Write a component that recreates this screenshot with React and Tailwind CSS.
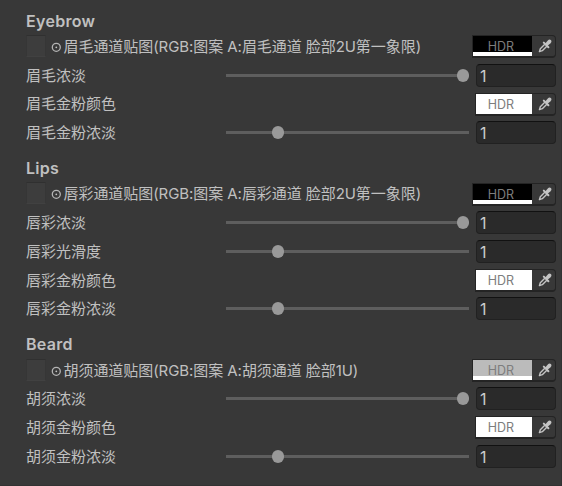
const groups = [
  {
    title: "Eyebrow",
    head: "h-[35px] pt-[11px]",
    rows: [
      { type: "texture", label: "眉毛通道贴图(RGB:图案 A:眉毛通道 脸部2U第一象限)", fill: "bg-black", h: "h-[29px]" },
      { type: "slider", label: "眉毛浓淡", full: true, h: "h-[28px]" },
      { type: "color", label: "眉毛金粉颜色", h: "h-[29px]", nudge: "mt-px" },
      { type: "slider", label: "眉毛金粉浓淡", h: "h-[29px]" },
    ],
  },
  {
    title: "Lips",
    head: "h-[32px] pt-[8px]",
    rows: [
      { type: "texture", label: "唇彩通道贴图(RGB:图案 A:唇彩通道 脸部2U第一象限)", fill: "bg-black", h: "h-[29px]", nudge: "mt-px" },
      { type: "slider", label: "唇彩浓淡", full: true, h: "h-[29px]" },
      { type: "slider", label: "唇彩光滑度", h: "h-[29px]" },
      { type: "color", label: "唇彩金粉颜色", h: "h-[28px]" },
      { type: "slider", label: "唇彩金粉浓淡", h: "h-[29px]" },
    ],
  },
  {
    title: "Beard",
    head: "h-[33px] pt-[8px]",
    rows: [
      { type: "texture", label: "胡须通道贴图(RGB:图案 A:胡须通道 脸部1U)", fill: "bg-[#bbbbbb]", h: "h-[28px]" },
      { type: "slider", label: "胡须浓淡", full: true, h: "h-[29px]" },
      { type: "color", label: "胡须金粉颜色", h: "h-[29px]" },
      { type: "slider", label: "胡须金粉浓淡", h: "h-[29px]" },
    ],
  },
];

function Eyedropper() {
  return (
    <svg viewBox="0 0 14 14" className="h-[14px] w-[14px]" fill="none">
      <path d="M6.8 5.2 2.3 9.7 1.4 12.6 4.3 11.7 8.8 7.2" stroke="#c4c4c4" strokeWidth="1.4" strokeLinejoin="round" />
      <path d="M5.8 3.6 10.4 8.2" stroke="#c4c4c4" strokeWidth="2" strokeLinecap="round" />
      <path d="M7 4.8 9.8 1.4Q11.4-.1 12.9 1.1 14.1 2.6 12.6 4.2L9.2 7Z" fill="#c4c4c4" />
    </svg>
  );
}

function ColorField({ wide, fill }) {
  return (
    <div
      className={`flex h-[23px] shrink-0 rounded-r-[4px] border border-b-2 border-[#242424] ${wide ? "w-[84px]" : "w-[81px]"}`}
    >
      <div className={`relative flex flex-1 flex-col ${fill}`}>
        <span className="absolute top-[3px] right-[18px] text-[12.5px] leading-[16px] text-[#7d7d7d]">HDR</span>
        {wide && <div className="mt-auto h-[4px] bg-white" />}
      </div>
      <div className="flex w-[23px] items-center justify-center pl-[2px]">
        <Eyedropper />
      </div>
    </div>
  );
}

function Slider({ full }) {
  return (
    <div className="relative flex h-[23px] w-[243px] shrink-0 items-center">
      <div className="h-[3px] w-full bg-[#5e5e5e]" />
      <div
        className={`absolute top-[5px] h-[13px] w-[12px] rounded-full bg-[#999999] ${full ? "left-[231px]" : "left-[46px]"}`}
      />
    </div>
  );
}

function Row({ row }) {
  return (
    <div className={`flex pl-[26px] ${row.h}`}>
      {row.type === "texture" ? (
        <div className="flex h-[23px] w-[446px]">
          <div className="h-[22px] w-[20px] border border-t-[#303030] border-r-[#363636] border-b-[#414141] border-l-[#363636] bg-[#3d3d3d]" />
          <svg viewBox="0 0 10 10" className="mt-[7px] ml-[5px] h-[10px] w-[10px]" fill="none">
            <circle cx="5.3" cy="5.3" r="4" stroke="#b4b4b4" strokeWidth="1.3" />
            <circle cx="5.3" cy="5.3" r="0.9" fill="#c4c4c4" />
          </svg>
          <span className="ml-[2.5px] leading-[24px] tracking-[-0.06px] whitespace-nowrap">{row.label}</span>
        </div>
      ) : (
        <span className="h-[23px] w-[200px] shrink-0 leading-[24px] whitespace-nowrap">{row.label}</span>
      )}
      {row.type === "texture" && (
        <div className={row.nudge}>
          <ColorField wide fill={row.fill} />
        </div>
      )}
      {row.type === "color" && (
        <div className={`ml-[249px] ${row.nudge ?? ""}`}>
          <ColorField fill="bg-white" />
        </div>
      )}
      {row.type === "slider" && (
        <>
          <Slider full={row.full} />
          <div className="ml-[7px] h-[23px] w-[80px] rounded-[4px] border border-[#212121] border-t-[#111111] bg-[#2a2a2a] pl-[3px] text-[16px] leading-[23px] text-[#cccccc]">
            1
          </div>
        </>
      )}
    </div>
  );
}

export default function App() {
  return (
    <div className="h-[486px] w-[562px] overflow-hidden border-r border-b border-[#323232] bg-[#383838] font-['Inter','Noto_Sans_CJK_SC',sans-serif] text-[15px] text-[#c0c0c0]">
      {groups.map((g) => (
        <section key={g.title}>
          <h2 className={`pl-[26px] text-[16px] leading-[20px] font-semibold tracking-[0.3px] ${g.head}`}>{g.title}</h2>
          {g.rows.map((row) => (
            <Row key={row.label} row={row} />
          ))}
        </section>
      ))}
    </div>
  );
}
